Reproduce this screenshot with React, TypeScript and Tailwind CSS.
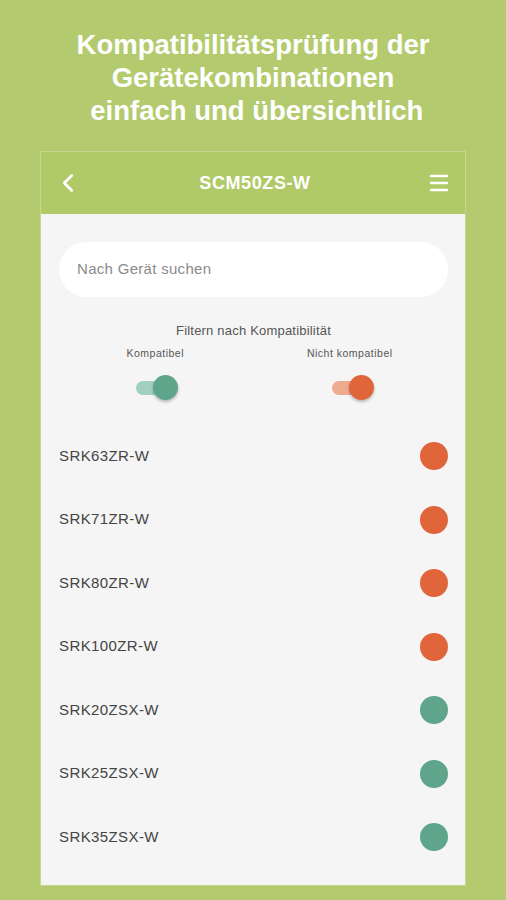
import { ChevronLeft, Menu } from 'lucide-react';

type Device = { name: string; ok: boolean };

const devices: Device[] = [
  { name: 'SRK63ZR-W', ok: false },
  { name: 'SRK71ZR-W', ok: false },
  { name: 'SRK80ZR-W', ok: false },
  { name: 'SRK100ZR-W', ok: false },
  { name: 'SRK20ZSX-W', ok: true },
  { name: 'SRK25ZSX-W', ok: true },
  { name: 'SRK35ZSX-W', ok: true },
];

function Toggle({ color }: { color: 'green' | 'orange' }) {
  const track = color === 'green' ? 'bg-[#a3cfc0]' : 'bg-[#eeab90]';
  const knob = color === 'green' ? 'bg-[#5ea58c]' : 'bg-[#e0653a]';
  return (
    <div className="relative w-[42px] h-[26px] flex items-center">
      <div className={`w-[36px] h-[14px] rounded-full ${track}`} />
      <div className={`absolute right-0 top-0 w-[25px] h-[25px] rounded-full shadow-[0_2px_3px_rgba(0,0,0,0.25)] ${knob}`} />
    </div>
  );
}

export default function App() {
  return (
    <div className="w-[506px] h-[900px] bg-[#b3cb6e] overflow-hidden" style={{ fontFamily: '"Liberation Sans", Arial, sans-serif' }}>
      <h1 className="pt-[28px] text-center text-white font-bold text-[27.5px] leading-[33px]">
        Kompatibilitätsprüfung der
        <br />
        Gerätekombinationen
        <br />
        &nbsp;einfach und übersichtlich
      </h1>

      <div className="mx-[40px] mt-[24px] h-[735px] border border-[#c4d98f] flex flex-col">
        <div className="h-[62px] bg-[#b0ca68] flex items-center justify-between px-[12px] text-white">
          <ChevronLeft className="w-[30px] h-[30px]" strokeWidth={2.2} />
          <span className="text-[18px] font-bold tracking-[0.6px]">SCM50ZS-W</span>
          <Menu className="w-[24px] h-[24px] mr-[2px]" strokeWidth={2.4} />
        </div>

        <div className="flex-1 bg-[#f5f5f5] pl-[18px] pr-[17px] pt-[28px]">
          <div className="h-[55px] bg-white rounded-full flex items-center px-[18px] text-[15px] tracking-[0.3px] text-[#8a8a8a]">
            Nach Gerät suchen
          </div>

          <div className="mt-[24px] text-center text-[13px] tracking-[0.2px] text-[#555]">Filtern nach Kompatibilität</div>
          <div className="grid grid-cols-2 mt-[5px]">
            <div className="flex flex-col items-center ml-[-2px]">
              <span className="text-[10.5px] tracking-[0.5px] text-[#555]">Kompatibel</span>
              <div className="mt-[14px] ml-[4px]">
                <Toggle color="green" />
              </div>
            </div>
            <div className="flex flex-col items-center ml-[-2px]">
              <span className="text-[10.5px] tracking-[0.5px] text-[#555]">Nicht kompatibel</span>
              <div className="mt-[14px] ml-[6px]">
                <Toggle color="orange" />
              </div>
            </div>
          </div>

          <div className="mt-[23px] flex flex-col">
            {devices.map((d) => (
              <div key={d.name} className="h-[63.5px] flex items-center justify-between">
                <span className="text-[15px] tracking-[0.4px] text-[#444]">{d.name}</span>
                <div className={`w-[28px] h-[28px] rounded-full ${d.ok ? 'bg-[#5ea58c]' : 'bg-[#e0653a]'}`} />
              </div>
            ))}
          </div>
        </div>
      </div>
    </div>
  );
}
